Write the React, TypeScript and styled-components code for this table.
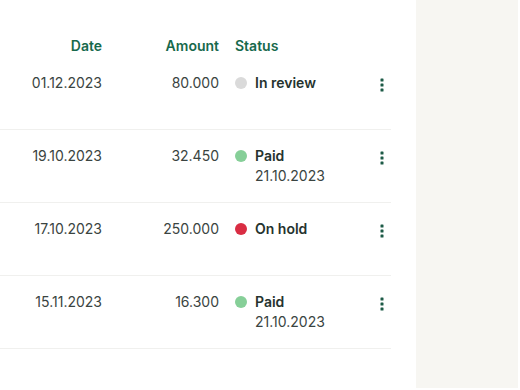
import React from "react";
import styled, { createGlobalStyle } from "styled-components";

const Global = createGlobalStyle`
  html, body { margin: 0; padding: 0; background: #ffffff; }
  body { font-family: Inter, "Noto Sans", Arial, sans-serif; -webkit-font-smoothing: antialiased; }
`;

const Page = styled.div`
  display: flex;
  width: 520px;
  height: 390px;
  overflow: hidden;
`;

const Main = styled.div`
  width: 416px;
  padding-top: 36px;
  box-sizing: border-box;
`;

const Aside = styled.aside`
  width: 102px;
  height: 388px;
  background: #f7f6f2;
`;

const Table = styled.div`
  width: 391px;
`;

const Row = styled.div<{ $header?: boolean }>`
  display: grid;
  grid-template-columns: 102px 117px 1fr 18px;
  align-items: start;
  height: ${(p) => (p.$header ? "21px" : "73px")};
  padding-top: ${(p) => (p.$header ? "0" : "16px")};
  box-sizing: border-box;
  border-bottom: ${(p) => (p.$header ? "none" : "1px solid #f0f0ee")};
`;

const HeadCell = styled.div<{ $left?: boolean }>`
  font-size: 14px;
  line-height: 20px;
  font-weight: 600;
  color: #17694c;
  text-align: ${(p) => (p.$left ? "left" : "right")};
  padding-left: ${(p) => (p.$left ? "16px" : "0")};
`;

const Cell = styled.div`
  font-size: 14px;
  line-height: 20px;
  color: #3a4441;
  text-align: right;
`;

const StatusCell = styled.div`
  padding-left: 16px;
  display: grid;
  grid-template-columns: 12px auto;
  column-gap: 8px;
  align-items: center;
`;

const Dot = styled.span<{ $color: string }>`
  width: 12px;
  height: 12px;
  border-radius: 50%;
  background: ${(p) => p.$color};
`;

const Label = styled.span`
  font-size: 14px;
  line-height: 20px;
  font-weight: 600;
  color: #25332e;
`;

const SubDate = styled.span`
  grid-column: 2;
  font-size: 14px;
  line-height: 20px;
  color: #3a4441;
`;

const Kebab = styled.button`
  border: none;
  background: none;
  padding: 0;
  margin-top: 3px;
  width: 18px;
  height: 18px;
  display: flex;
  align-items: center;
  justify-content: center;
  cursor: pointer;
`;

type Item = {
  date: string;
  amount: string;
  status: string;
  color: string;
  paidOn?: string;
};

const items: Item[] = [
  { date: "01.12.2023", amount: "80.000", status: "In review", color: "#dadada" },
  { date: "19.10.2023", amount: "32.450", status: "Paid", color: "#86cf98", paidOn: "21.10.2023" },
  { date: "17.10.2023", amount: "250.000", status: "On hold", color: "#d92d43" },
  { date: "15.11.2023", amount: "16.300", status: "Paid", color: "#86cf98", paidOn: "21.10.2023" },
];

const Dots = () => (
  <svg width="4" height="14" viewBox="0 0 4 14">
    <rect x="0.5" y="0.5" width="3" height="3" rx="0.6" fill="#1d5b47" />
    <rect x="0.5" y="5.5" width="3" height="3" rx="0.6" fill="#1d5b47" />
    <rect x="0.5" y="10.5" width="3" height="3" rx="0.6" fill="#1d5b47" />
  </svg>
);

export default function App() {
  return (
    <>
      <Global />
      <Page>
        <Main>
          <Table>
            <Row $header>
              <HeadCell>Date</HeadCell>
              <HeadCell>Amount</HeadCell>
              <HeadCell $left>Status</HeadCell>
              <div />
            </Row>
            {items.map((it, i) => (
              <Row key={i}>
                <Cell>{it.date}</Cell>
                <Cell>{it.amount}</Cell>
                <StatusCell>
                  <Dot $color={it.color} />
                  <Label>{it.status}</Label>
                  {it.paidOn && <SubDate>{it.paidOn}</SubDate>}
                </StatusCell>
                <Kebab aria-label="More">
                  <Dots />
                </Kebab>
              </Row>
            ))}
          </Table>
        </Main>
        <Aside />
      </Page>
    </>
  );
}
